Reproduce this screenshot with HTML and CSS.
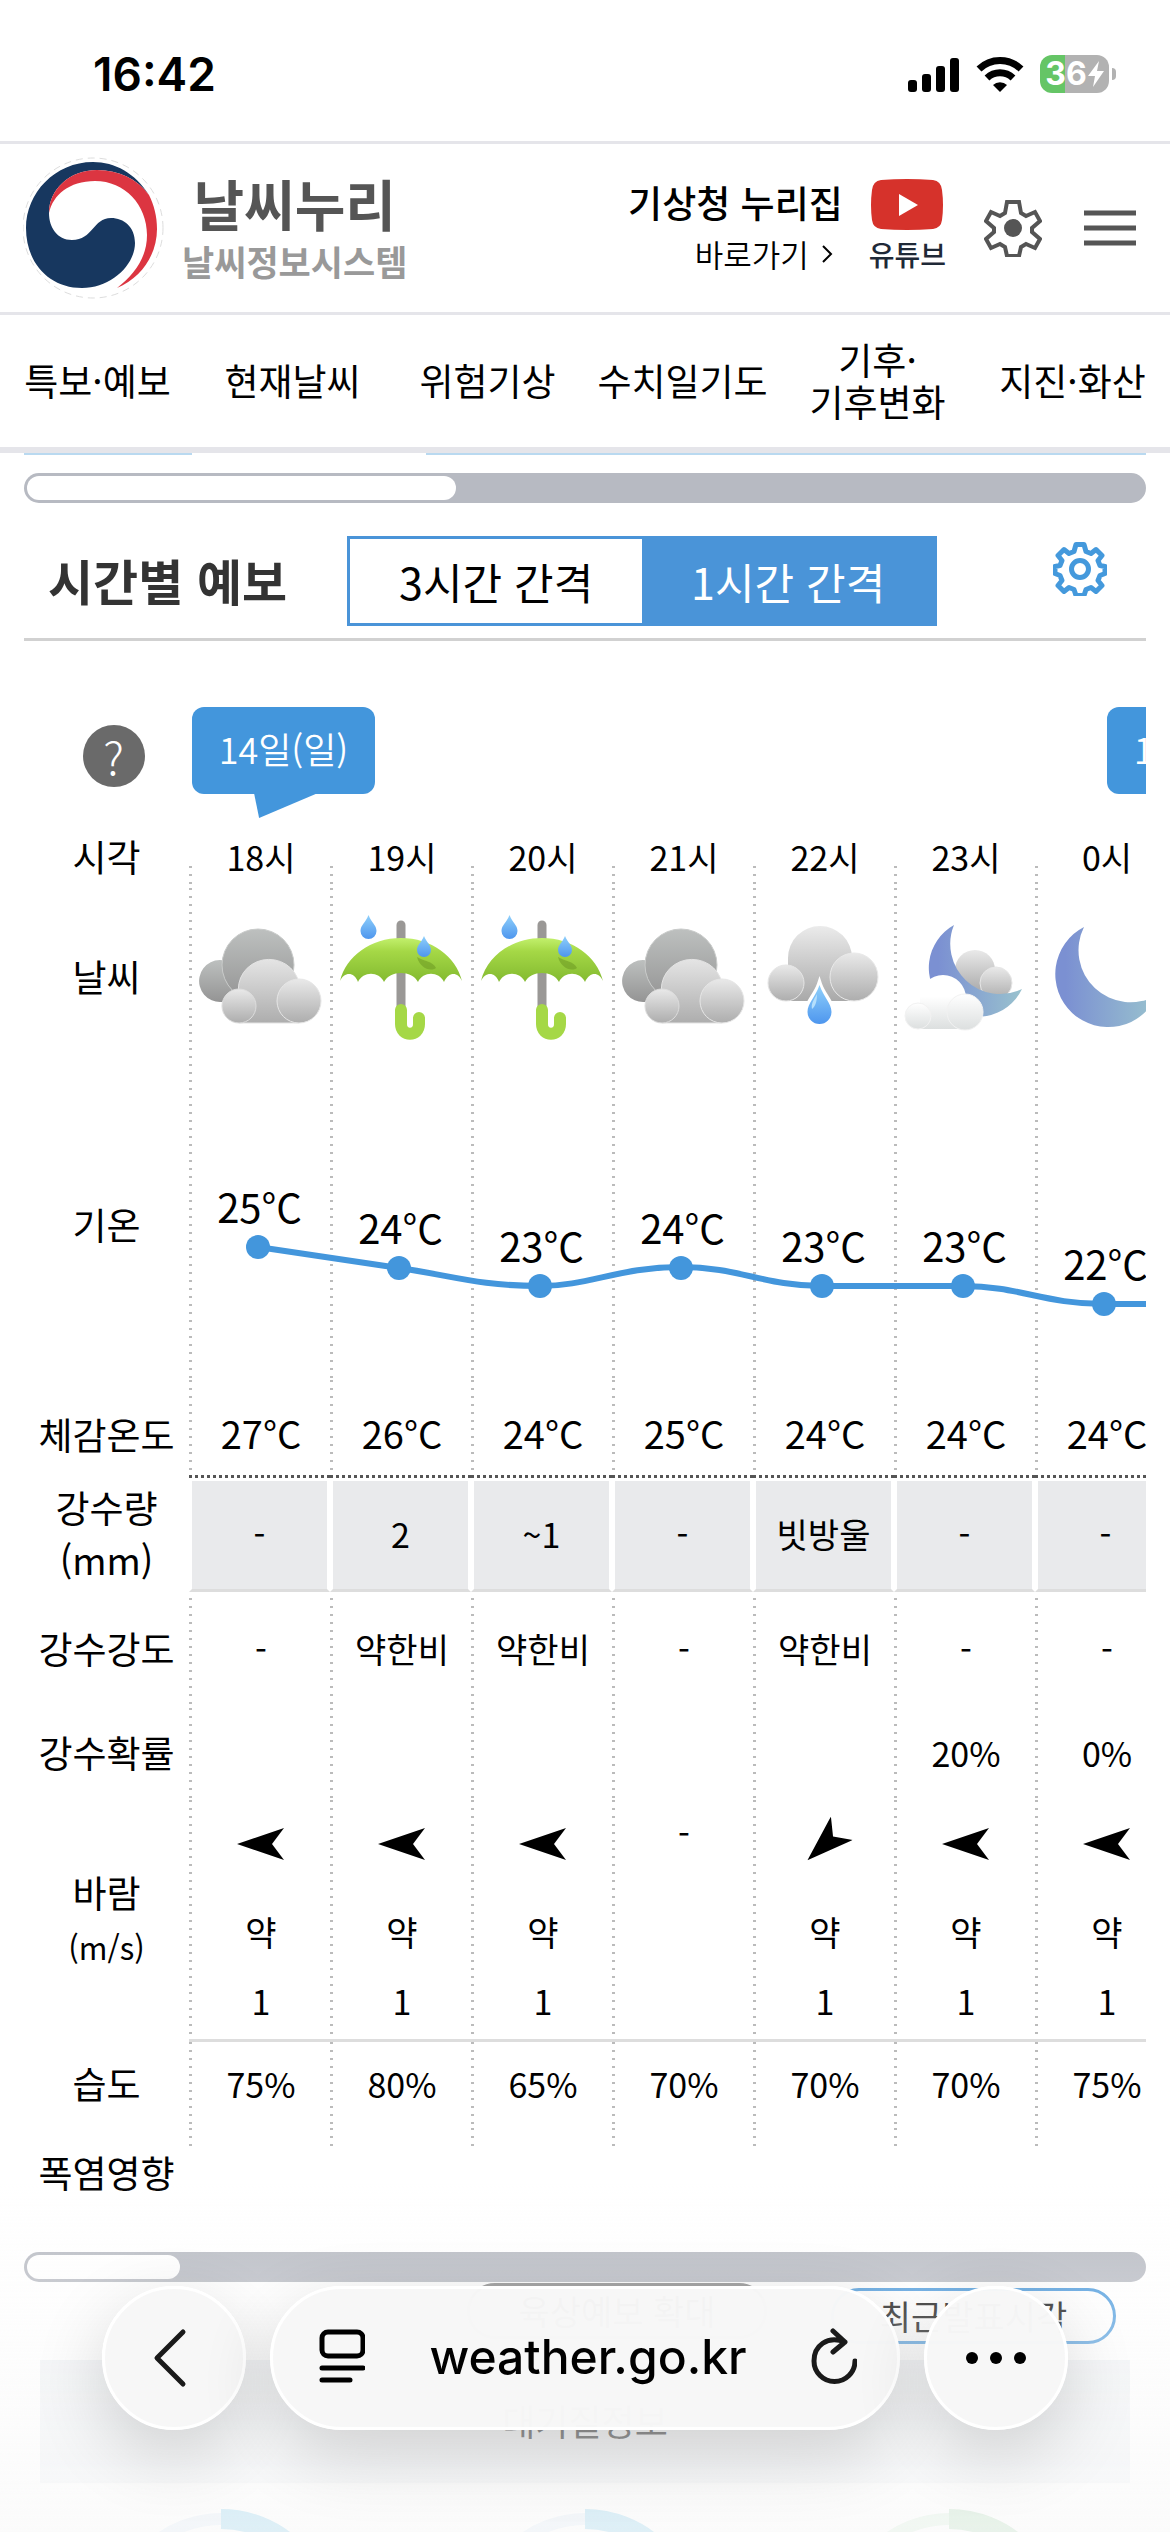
FILE: index.html
```html
<!DOCTYPE html>
<html lang="ko">
<head>
  <meta charset="UTF-8">
  <title>날씨누리 - 시간별 예보</title>
  <meta name="viewport" content="width=device-width, initial-scale=1">
  <link rel="stylesheet" href="styles.css">
</head>
<body>

<!-- shared gradients and icons -->
<svg class="defs" width="0" height="0" aria-hidden="true">
  <defs>
    <linearGradient id="g-light" x1="0" y1="0" x2="0" y2="1">
      <stop offset="0" stop-color="#e9e9e9" />
      <stop offset="1" stop-color="#adadad" />
    </linearGradient>
    <linearGradient id="g-base" gradientUnits="userSpaceOnUse" x1="0" y1="39" x2="0" y2="108">
      <stop offset="0" stop-color="#e9e9e9" />
      <stop offset="1" stop-color="#adadad" />
    </linearGradient>
    <linearGradient id="g-rain" gradientUnits="userSpaceOnUse" x1="0" y1="11" x2="0" y2="86">
      <stop offset="0" stop-color="#ebebeb" />
      <stop offset="1" stop-color="#a9a9a9" />
    </linearGradient>
    <linearGradient id="g-dark" x1="0" y1="0" x2="0" y2="1">
      <stop offset="0" stop-color="#bdc0bf" />
      <stop offset="1" stop-color="#949494" />
    </linearGradient>
    <linearGradient id="g-white" x1="0" y1="0" x2="0" y2="1">
      <stop offset="0" stop-color="#ffffff" />
      <stop offset="1" stop-color="#dcdfdf" />
    </linearGradient>
    <linearGradient id="g-snow" gradientUnits="userSpaceOnUse" x1="0" y1="60" x2="0" y2="114">
      <stop offset=".4" stop-color="#ffffff" />
      <stop offset="1" stop-color="#dcdfdf" />
    </linearGradient>
    <linearGradient id="g-drop" x1="0" y1="0" x2="0" y2="1">
      <stop offset="0" stop-color="#8fd0fb" />
      <stop offset="1" stop-color="#4e96ee" />
    </linearGradient>
    <linearGradient id="g-green" x1="0" y1="0" x2="0" y2="1">
      <stop offset="0" stop-color="#c2f06c" />
      <stop offset=".3" stop-color="#a5d846" />
      <stop offset="1" stop-color="#83ba30" />
    </linearGradient>
    <linearGradient id="g-moon" x1="0" y1="0" x2="1" y2="0">
      <stop offset=".1" stop-color="#7b90d2" />
      <stop offset="1" stop-color="#99c2ce" />
    </linearGradient>

    <symbol id="cloudy" viewBox="0 0 126 126">
      <path d="M60 87H23a21 21 0 1 1 8-40z" fill="url(#g-dark)" />
      <circle cx="60" cy="50" r="36" fill="url(#g-dark)" stroke="#c9cbca" stroke-width="1" />
      <path d="M41 108V80a30 29 0 1 1 60 -12V108z" fill="url(#g-base)" stroke="#e4e4e4" stroke-width="1" />
      <circle cx="41" cy="91" r="17" fill="url(#g-light)" stroke="#ddd" stroke-width="1" />
      <circle cx="101" cy="86" r="22" fill="url(#g-light)" stroke="#e6e6e6" stroke-width="1" />
    </symbol>

    <symbol id="umbrella" viewBox="0 0 126 126">
      <path d="M62 10v84" stroke="#9a9896" stroke-width="9" stroke-linecap="round" fill="none" />
      <path d="M1 66C7 41 32 23 62 23s55 18 61 43c-4-9-13-10-18 1-5-11-21-11-26 0-6-12-28-12-34 0-5-11-21-11-26 0C15 56 5 57 1 66z" fill="url(#g-green)" />
      <path d="M78 42c6 4 16 4 19 11-6 4-16 0-19-11z" fill="#6f9c24" opacity=".6" />
      <path d="M62 95v14c0 13 18 13 18 0v-6" stroke="#a5d846" stroke-width="12" stroke-linecap="round" fill="none" />
      <path d="M29.500 0c3 8 8 10 8 16a8 8 0 0 1-16 0c0-6 5-8 8-16z" fill="url(#g-drop)" />
      <path d="M85 21c3 7 7 9 7 14a7 7 0 0 1-14 0c0-5 4-7 7-14z" fill="url(#g-drop)" />
    </symbol>

    <symbol id="rain" viewBox="0 0 126 126">
      <path d="M24 86V60h2V43a32 32 0 0 1 64 0v43z" fill="url(#g-rain)" />
      <circle cx="24" cy="68" r="18" fill="url(#g-light)" stroke="#e6e6e6" stroke-width="1" />
      <circle cx="92" cy="62" r="24" fill="url(#g-light)" stroke="#e9e9e9" stroke-width="1" />
      <path d="M57.500 69c4 12 13 18 13 28a13 13 0 0 1-26 0c0-10 9-16 13-28z" fill="#fff" stroke="#fff" stroke-width="5" />
      <path d="M57.500 70c4 12 12 18 12 27a12 12 0 0 1-24 0c0-9 8-15 12-27z" fill="url(#g-drop)" />
      <path d="M55 79c-4 7-6 10-5 15 4-3 5-9 5-15z" fill="#b5dffc" />
    </symbol>

    <symbol id="night-cloudy" viewBox="0 0 126 126">
      <path d="M55 58h38v26h-38z" fill="#c0c0c0" />
      <circle cx="72" cy="55" r="20" fill="url(#g-light)" />
      <circle cx="93" cy="68" r="16" fill="url(#g-light)" stroke="#e6e6e6" stroke-width="1" />
      <path d="M51 10A49 49 0 1 0 119 74A50 50 0 0 1 51 10z" fill="url(#g-moon)" />
      <path d="M15 114V95h2V83a23 23 0 0 1 46 0v31z" fill="url(#g-snow)" />
      <circle cx="15" cy="101" r="13" fill="url(#g-white)" stroke="#f2f2f2" stroke-width="1" />
      <circle cx="62" cy="97" r="18" fill="url(#g-white)" stroke="#f2f2f2" stroke-width="1" />
    </symbol>

    <symbol id="moon" viewBox="0 0 126 126">
      <path d="M40 12A53 53 0 1 0 113 80A52 52 0 0 1 40 12z" fill="url(#g-moon)" />
    </symbol>

    <symbol id="wind" viewBox="0 0 48 32">
      <path d="M0 16L47 0L35 16L47 32z" />
    </symbol>
  </defs>
</svg>

<div class="page">
  <div class="status">
    <span class="clock">16:42</span>
    <div class="status-icons">
      <svg width="52" height="36" viewBox="0 0 52 36">
        <rect x="0" y="24" width="9" height="12" rx="3" />
        <rect x="14" y="18" width="9" height="18" rx="3" />
        <rect x="28" y="10" width="9" height="26" rx="3" />
        <rect x="42" y="2" width="9" height="34" rx="3" />
      </svg>
      <svg width="48" height="36" viewBox="0 0 48 36">
        <path d="M3 13a30 30 0 0 1 42 0" fill="none" stroke="#000" stroke-width="7" />
        <path d="M11 22a19 19 0 0 1 26 0" fill="none" stroke="#000" stroke-width="7" />
        <path d="M17 29a10 10 0 0 1 14 0l-7 7z" />
      </svg>
      <div class="battery">
        <span>36</span>
        <svg width="16" height="26" viewBox="0 0 16 26"><path d="M11 0L0 15h7l-2 11L16 10H9z" fill="#fff" /></svg>
      </div>
    </div>
  </div>

  <header class="header">
    <a class="logo" href="#">
      <svg width="141" height="142" viewBox="0 0 141 142">
        <circle cx="70" cy="71" r="70" fill="none" stroke="#ddd" stroke-dasharray="7 5" />
        <path fill="#17375f" d="M126 38C112 16 92 5 70 5C32 5 3 36 3 71C3 106 26 131 59 131C88 131 112 108 112 86C112 70 101 61 88 61C70 61 70 83 49 83C34 83 26 70 26 56C26 33 46 13 74 13C96 13 114 22 126 38z" />
        <path fill="#dc3541" d="M26 56C26 33 46 13 74 13C96 13 114 22 126 38C131 48 134 59 134 72C134 98 118 121 94 131C112 117 124 100 124 78C124 48 102 24 72 24C46 24 30 38 26 56z" />
      </svg>
      <span class="logo-text">
        <strong>날씨누리</strong>
        <small>날씨정보시스템</small>
      </span>
    </a>
    <div class="header-menu">
      <a class="kma" href="#">
        <strong>기상청 누리집</strong>
        <span>바로가기
          <svg width="12" height="18" viewBox="0 0 12 18"><path d="M2 1l8 8-8 8" fill="none" stroke="#000" stroke-width="2" /></svg>
        </span>
      </a>
      <a class="youtube" href="#">
        <svg width="72" height="51" viewBox="0 0 72 51">
          <path d="M10 1Q36-1 62 1Q70 2 71 11Q73 26 71 41Q70 49 62 50Q36 52 10 50Q2 49 1 41Q-1 26 1 11Q2 2 10 1z" fill="#d6322b" />
          <path d="M28 15l19 11-19 11z" fill="#fff" />
        </svg>
        유튜브
      </a>
      <button class="icon-btn" aria-label="설정">
        <svg width="58" height="58" viewBox="0 0 58 58">
          <path d="M23 2h12l2 11 5 3 9-4 5 9-8 7v4l8 7-5 9-9-4-5 3-2 9h-12l-2-9-5-3-9 4-5-9 8-7v-4l-8-7 5-9 9 4 5-3z" transform="translate(0 1)" fill="none" stroke="#555" stroke-width="4" />
          <circle cx="29" cy="29" r="9" fill="#555" />
        </svg>
      </button>
      <button class="icon-btn" aria-label="전체 메뉴">
        <svg width="52" height="36" viewBox="0 0 52 36"><path d="M0 3h52M0 18h52M0 33h52" stroke="#555" stroke-width="5" /></svg>
      </button>
    </div>
  </header>

  <nav class="nav">
    <a href="#">특보·예보</a>
    <a href="#">현재날씨</a>
    <a href="#">위험기상</a>
    <a href="#">수치일기도</a>
    <a href="#">기후·<br>기후변화</a>
    <a href="#">지진·화산</a>
  </nav>

  <main class="content">
    <div class="prev-edge"><i></i><i></i></div>
    <div class="track track-day"><div class="thumb" style="width:429px"></div></div>

    <div class="title-bar">
      <h2>시간별 예보</h2>
      <div class="interval">
        <button>3시간 간격</button>
        <button class="on">1시간 간격</button>
      </div>
      <button class="icon-btn set-btn" aria-label="예보 설정">
        <svg width="54" height="54" viewBox="0 0 54 54">
          <path d="M23 2.500h8l2 7 5 2 5-4 6 6-4 5 2 5 5 1v7l-5 2-2 5 4 5-6 6-5-4-5 2-2 6h-8l-2-6-5-2-5 4-6-6 4-5-2-5-5-2v-7l5-1 2-5-4-5 6-6 5 4 5-2z" fill="none" stroke="#4499dc" stroke-width="5" stroke-linejoin="round" />
          <circle cx="27" cy="27" r="8.500" fill="none" stroke="#4499dc" stroke-width="5" />
        </svg>
      </button>
    </div>

    <div class="scroller">
      <table class="forecast">
        <colgroup>
          <col class="c-label">
          <col span="7">
        </colgroup>
        <thead>
          <tr class="r-day">
            <th><button class="help" aria-label="도움말">?</button></th>
            <td colspan="6"><span class="balloon tail">14일(일)</span></td>
            <td><span class="balloon next">15일(월)</span></td>
          </tr>
          <tr class="r-time">
            <th>시각</th>
            <td>18시</td><td>19시</td><td>20시</td><td>21시</td><td>22시</td><td>23시</td><td>0시</td>
          </tr>
        </thead>
        <tbody>
          <tr class="r-weather">
            <th>날씨</th>
            <td><svg role="img" aria-label="흐림"><use href="#cloudy" /></svg></td>
            <td><svg role="img" aria-label="비"><use href="#umbrella" /></svg></td>
            <td><svg role="img" aria-label="비"><use href="#umbrella" /></svg></td>
            <td><svg role="img" aria-label="흐림"><use href="#cloudy" /></svg></td>
            <td><svg role="img" aria-label="흐리고 비"><use href="#rain" /></svg></td>
            <td><svg role="img" aria-label="구름많음"><use href="#night-cloudy" /></svg></td>
            <td><svg role="img" aria-label="맑음"><use href="#moon" /></svg></td>
          </tr>
          <tr class="r-temp">
            <th>기온</th>
            <td style="padding-top:104px">
              <svg class="chart" width="987" height="308" viewBox="0 0 987 308">
                <path d="M69 175L210 196C260 203 290 214 351 214C400 214 430 195 492 195C550 195 575 214 633 214H774C830 214 855 232 915 232H987" />
                <circle cx="69" cy="175" r="12" />
                <circle cx="210" cy="196" r="12" />
                <circle cx="351" cy="214" r="12" />
                <circle cx="492" cy="196" r="12" />
                <circle cx="633" cy="214" r="12" />
                <circle cx="774" cy="214" r="12" />
                <circle cx="915" cy="232" r="12" />
              </svg>
              25°C
            </td>
            <td style="padding-top:125px">24°C</td>
            <td style="padding-top:143px">23°C</td>
            <td style="padding-top:125px">24°C</td>
            <td style="padding-top:143px">23°C</td>
            <td style="padding-top:143px">23°C</td>
            <td style="padding-top:161px">22°C</td>
          </tr>
          <tr class="r-feel">
            <th>체감온도</th>
            <td>27°C</td><td>26°C</td><td>24°C</td><td>25°C</td><td>24°C</td><td>24°C</td><td>24°C</td>
          </tr>
          <tr class="r-rain">
            <th>강수량<br>(mm)</th>
            <td>-</td><td>2</td><td>~1</td><td>-</td><td>빗방울</td><td>-</td><td>-</td>
          </tr>
          <tr class="r-strength">
            <th>강수강도</th>
            <td>-</td><td>약한비</td><td>약한비</td><td>-</td><td>약한비</td><td>-</td><td>-</td>
          </tr>
          <tr class="r-prob">
            <th>강수확률</th>
            <td></td><td></td><td></td><td></td><td></td><td>20%</td><td>0%</td>
          </tr>
          <tr class="r-wind">
            <th>바람<br><small>(m/s)</small></th>
            <td><svg><use href="#wind" /></svg><p>약</p><p>1</p></td>
            <td><svg><use href="#wind" /></svg><p>약</p><p>1</p></td>
            <td><svg><use href="#wind" /></svg><p>약</p><p>1</p></td>
            <td class="calm">-</td>
            <td><svg class="sw"><use href="#wind" /></svg><p>약</p><p>1</p></td>
            <td><svg><use href="#wind" /></svg><p>약</p><p>1</p></td>
            <td><svg><use href="#wind" /></svg><p>약</p><p>1</p></td>
          </tr>
          <tr class="r-humid">
            <th>습도</th>
            <td>75%</td><td>80%</td><td>65%</td><td>70%</td><td>70%</td><td>70%</td><td>75%</td>
          </tr>
          <tr class="r-heat">
            <th>폭염영향</th>
            <td></td><td></td><td></td><td></td><td></td><td></td><td></td>
          </tr>
        </tbody>
      </table>
    </div>
    <div class="track"><div class="thumb" style="width:153px"></div></div>

    <div class="more-links">
      <a class="gray" href="#">육상예보 확대</a>
      <a href="#">최근발표시각</a>
    </div>
    <h3 class="air-title">대기질정보</h3>
    <div class="rings">
      <svg width="230" height="230" viewBox="0 0 230 230">
        <circle cx="115" cy="115" r="105" stroke="#dfeaf5" stroke-width="12" />
        <path d="M115 10a105 105 0 0 1 0 210" stroke="#8fd0ec" stroke-width="20" />
      </svg>
      <svg width="230" height="230" viewBox="0 0 230 230">
        <circle cx="115" cy="115" r="105" stroke="#dfeaf5" stroke-width="12" />
        <path d="M115 10a105 105 0 0 1 0 210" stroke="#8fd0ec" stroke-width="20" />
      </svg>
      <svg width="230" height="230" viewBox="0 0 230 230">
        <circle cx="115" cy="115" r="105" stroke="#d8eedc" stroke-width="12" />
        <path d="M115 10a105 105 0 0 1 0 210" stroke="#b5dcbc" stroke-width="20" />
      </svg>
    </div>
  </main>
</div>

<!-- browser toolbar -->
<div class="fade"></div>
<div class="toolbar">
  <button class="round back" aria-label="뒤로">
    <svg width="36" height="60" viewBox="0 0 36 60"><path d="M31 4L5 30l26 26" fill="none" stroke="#1a1a1a" stroke-width="5" stroke-linecap="round" stroke-linejoin="round" /></svg>
  </button>
  <div class="address">
    <svg width="46" height="54" viewBox="0 0 46 54" fill="none" stroke="#000" stroke-width="5" stroke-linecap="round">
      <rect x="3" y="3" width="41" height="24" rx="6" />
      <path d="M3 39h41M3 51h28" />
    </svg>
    <span>weather.go.kr</span>
    <button aria-label="새로고침">
      <svg width="46" height="56" viewBox="0 0 46 56" fill="none" stroke="#1a1a1a" stroke-width="5" stroke-linecap="round" stroke-linejoin="round">
        <path d="M34 14C16 7 3 18 3 33a20 20 0 0 0 41 0M22 3l12 11-12 10" />
      </svg>
    </button>
  </div>
  <button class="round" aria-label="더보기">
    <svg width="60" height="12" viewBox="0 0 60 12"><circle cx="6" cy="6" r="6" /><circle cx="30" cy="6" r="6" /><circle cx="54" cy="6" r="6" /></svg>
  </button>
</div>

</body>
</html>
```
FILE: styles.css
```css
*, *::before, *::after {
  box-sizing: border-box;
  margin: 0;
  padding: 0;
}

body {
  font-family: "Noto Sans CJK KR", sans-serif;
  font-size: 36px;
  color: #000;
  background: #fff;
}
a {
  color: inherit;
  text-decoration: none;
}
button {
  font: inherit;
  color: inherit;
  border: 0;
  background: none;
}
svg {
  display: block;
}
.defs {
  position: absolute;
}
.page {
  height: 100vh;
  overflow: hidden;
}

/* status bar */
.status {
  display: flex;
  justify-content: space-between;
  align-items: center;
  height: 144px;
  padding: 6px 54px 0 93px;
  border-bottom: 3px solid #e5e5ea;
}
.clock {
  font: 600 46px Inter, sans-serif;
}
.status-icons {
  display: flex;
  align-items: center;
  gap: 16px;
}
.battery {
  position: relative;
  display: flex;
  align-items: center;
  justify-content: center;
  gap: 1px;
  width: 69px;
  height: 38px;
  margin-right: 7px;
  border-radius: 12px;
  background: linear-gradient(90deg, #65c566 36%, #b2b2b2 36%);
  color: #fff;
  font: 700 32px Inter, sans-serif;
}
.battery::after {
  content: "";
  position: absolute;
  right: -7px;
  width: 4px;
  height: 12px;
  border-radius: 0 4px 4px 0;
  background: #b2b2b2;
}

/* header */
.header {
  display: flex;
  justify-content: space-between;
  align-items: center;
  height: 171px;
  padding: 0 34px 0 23px;
  border-bottom: 3px solid #e5e5ea;
}
.logo,
.header-menu {
  display: flex;
  align-items: center;
}
.logo {
  gap: 18px;
}
.logo-text {
  display: flex;
  flex-direction: column;
  align-items: center;
}
.logo-text strong {
  font-size: 55px;
  line-height: 66px;
  color: #555;
}
.logo-text small {
  font-size: 35px;
  font-weight: 700;
  line-height: 52px;
  color: #999;
}
.header-menu {
  gap: 42px;
}
.kma {
  display: flex;
  flex-direction: column;
  align-items: flex-end;
  margin-right: -16px;
}
.kma strong {
  font-size: 37px;
  line-height: 52px;
  font-weight: 500;
}
.kma span {
  display: flex;
  align-items: center;
  gap: 12px;
  padding-right: 10px;
  font-size: 31px;
  line-height: 52px;
  font-weight: 350;
}
.youtube {
  display: flex;
  flex-direction: column;
  align-items: center;
  font-size: 28px;
  line-height: 48px;
  font-weight: 500;
  color: #1f2937;
  margin-right: -4px;
}

/* main menu */
.nav {
  display: flex;
  align-items: center;
  height: 138px;
  padding-bottom: 3px;
  border-bottom: 6px solid #e5e5ea;
}
.nav a {
  flex: 1;
  font-size: 37px;
  line-height: 42px;
  text-align: center;
  white-space: nowrap;
}

.content {
  padding: 0 24px;
}
.prev-edge {
  display: flex;
  gap: 234px;
  height: 2px;
}
.prev-edge i {
  flex: 1;
  background: #b9d9f0;
}
.prev-edge i:first-child {
  flex: 0 0 168px;
}
.track {
  height: 30px;
  margin-top: 32px;
  padding: 3px;
  border-radius: 15px;
  background: #b7bac2;
}
.track-day {
  margin-top: 18px;
}
.thumb {
  height: 24px;
  border-radius: 12px;
  background: #fff;
}

/* title and interval switch */
.title-bar {
  display: flex;
  align-items: flex-start;
  height: 138px;
  padding: 33px 39px 0 24px;
  border-bottom: 3px solid #d1d1d1;
}
.title-bar h2 {
  font-size: 49px;
  line-height: 88px;
  color: #333;
}
.interval {
  display: flex;
  margin-left: 60px;
  border: 3px solid #4a94d8;
}
.interval button {
  width: 292px;
  height: 84px;
  font-size: 43px;
  line-height: 82px;
}
.interval .on {
  background: #4a94d8;
  color: #fff;
}
.set-btn {
  margin: 6px 0 0 auto;
}

/* forecast table */
.scroller {
  overflow: hidden;
}
.forecast {
  width: 1152px;
  table-layout: fixed;
  border-collapse: separate;
  border-spacing: 0;
  font-size: 34px;
  text-align: center;
}
.c-label {
  width: 165px;
}
.forecast th {
  padding-bottom: 4px;
  font-size: 37px;
  font-weight: 400;
  line-height: 52px;
}
.forecast td {
  padding: 0 0 4px 3px;
  white-space: nowrap;
  /* dotted column line */
  background: repeating-linear-gradient(#bbb 0 2px, transparent 2px 8px) left top / 3px 100% no-repeat;
}
.r-day {
  height: 187px;
}
.forecast .r-day th {
  padding-top: 46px;
}
.forecast .r-day td {
  padding-top: 66px;
  background: none;
  text-align: left;
  vertical-align: top;
}
.help {
  width: 62px;
  height: 62px;
  margin-left: 14px;
  border-radius: 50%;
  background: #6a6a6a;
  color: #fff;
  font-size: 46px;
  font-weight: 300;
  line-height: 58px;
}
.balloon {
  position: relative;
  display: block;
  width: 183px;
  height: 87px;
  border-radius: 12px;
  background: #4396dc;
  color: #fff;
  font-size: 36px;
  font-weight: 350;
  line-height: 82px;
  text-align: center;
}
.tail::after {
  content: "";
  position: absolute;
  top: 86px;
  left: 62px;
  width: 64px;
  height: 25px;
  background: #4396dc;
  clip-path: polygon(0 0, 100% 0, 8% 100%);
}
.next {
  margin-left: 69px;
}
.r-time {
  height: 60px;
}
.forecast .r-time td {
  background-position: left bottom;
  background-size: 3px 22px;
}
.r-weather {
  height: 184px;
}
.forecast .r-weather th {
  padding-bottom: 8px;
}
.r-weather svg {
  width: 126px;
  height: 126px;
  margin: 0 auto;
}
.r-temp {
  height: 308px;
}
.forecast .r-temp td {
  position: relative;
  padding-left: 0;
  font-size: 40px;
  line-height: 60px;
  vertical-align: top;
}
.chart {
  position: absolute;
  top: 0;
  left: 0;
  z-index: 1;
  fill: #4396dc;
}
.chart path {
  fill: none;
  stroke: #4396dc;
  stroke-width: 6;
}
.r-feel {
  height: 98px;
}
.forecast .r-feel td,
.forecast .r-feel th {
  padding-top: 14px;
}
.r-feel td {
  font-size: 38px;
  border-bottom: 3px dotted #555;
}
.r-rain {
  height: 114px;
}
.forecast .r-rain td {
  border: 3px solid #fff;
  border-bottom-color: #ddd;
  background: #e9eaec;
  background-clip: padding-box;
  padding-left: 0;
}
.r-strength {
  height: 116px;
}
.forecast .r-strength td {
  background-position: left bottom;
  background-size: 3px 110px;
}
.r-prob {
  height: 92px;
}
.r-wind {
  height: 242px;
}
.forecast .r-wind td {
  vertical-align: top;
  border-bottom: 3px solid #ddd;
}
.forecast .r-wind small {
  font-size: 31px;
}
.r-wind svg {
  width: 48px;
  height: 32px;
  margin: 28px auto;
}
.r-wind .sw {
  transform: rotate(-43deg);
}
.r-wind p {
  line-height: 88px;
}
.r-wind p + p {
  line-height: 50px;
}
.r-wind .calm {
  line-height: 66px;
}
.r-humid {
  height: 86px;
}
.r-heat {
  height: 92px;
}
.forecast .r-heat td {
  background-size: 3px 24px;
}

/* next section */
.more-links {
  display: flex;
  justify-content: flex-end;
  gap: 64px;
  padding: 6px 30px 0;
}
.more-links a {
  width: 285px;
  height: 56px;
  border: 3px solid #4396dc;
  border-radius: 28px;
  font-size: 34px;
  line-height: 50px;
  text-align: center;
}
.more-links .gray {
  width: 300px;
  border-color: #888;
  margin-top: -5px;
}
.air-title {
  height: 123px;
  margin: 16px 16px 0;
  background: #eff2f5;
  font-size: 36px;
  font-weight: 400;
  line-height: 120px;
  text-align: center;
}
.rings {
  display: flex;
  justify-content: space-between;
  padding: 26px 82px 0;
}
.rings svg {
  fill: none;
}

/* browser toolbar */
.fade {
  position: fixed;
  left: 0;
  right: 0;
  bottom: 0;
  height: 350px;
  background: linear-gradient(rgba(250, 250, 250, 0), rgba(250, 250, 250, .5) 55%, rgba(250, 250, 250, .75));
}
.toolbar {
  position: fixed;
  left: 102px;
  right: 102px;
  bottom: 102px;
  display: flex;
  gap: 24px;
}
.round,
.address {
  display: flex;
  align-items: center;
  height: 144px;
  border: 3px solid #fff;
  border-radius: 72px;
  background: rgba(247, 247, 247, .98);
  box-shadow: 0 24px 72px rgba(0, 0, 0, .16);
}
.round {
  justify-content: center;
  width: 144px;
}
.back {
  padding-right: 8px;
}
.address {
  flex: 1;
  justify-content: space-between;
  padding: 0 40px 4px 46px;
  font: 500 48px Inter, sans-serif;
}
```
